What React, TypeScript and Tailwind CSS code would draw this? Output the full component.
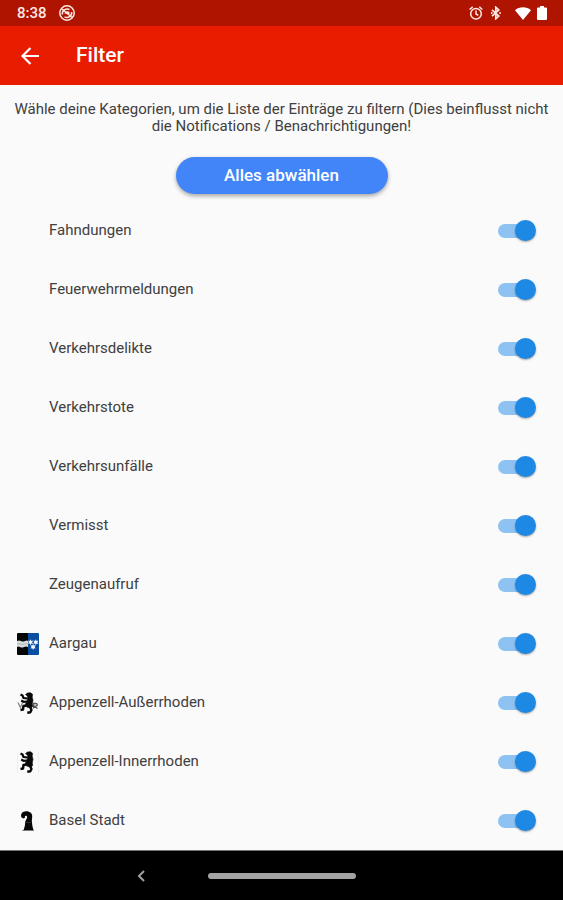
import { useState } from "react";
import type { ReactNode } from "react";

interface Category {
  id: string;
  label: string;
  icon?: ReactNode;
}

function AargauIcon() {
  return (
    <svg viewBox="0 0 22 22" className="size-[22px]" aria-hidden="true">
      <rect width="12" height="22" rx="1" fill="#050505" />
      <rect x="11" width="11" height="22" rx="1" fill="#0a4ea2" />
      <path d="M0 8q2-1 4 0t4 0 3 0v6q-2-1-4 0t-4 0-3 0z" fill="#d9dcdc" />
      <path d="M0 11q2-1 4 0t4 0 3 0" stroke="#a5a8a8" strokeWidth=".7" fill="none" />
      <g fill="#f4f8ff">
        <path d="M13.5 6.3l.8 1.6 1.8-.3-1 1.6 1 1.7-1.800-.3-.8 1.600-.8-1.600-1.600.3.8-1.700-.8-1.600 1.600.3z" />
        <path d="M18.800 6.300l.8 1.600 1.800-.3-1 1.600 1 1.700-1.800-.3-.8 1.600-.8-1.600-1.800.3 1-1.700-1-1.600 1.800.3z" />
        <path d="M16.100 11l.8 1.600 1.800-.3-1 1.600 1 1.700-1.800-.3-.8 1.600-.8-1.600-1.800.3 1-1.700-1-1.600 1.800.3z" />
      </g>
    </svg>
  );
}

function Bear() {
  return (
    <g fill="none" stroke="#080808" strokeLinejoin="round">
      <path d="M8.500 2.500l2-1.500 3-.3 2 1.500-.3 3 .8 3-.7 3.500.3 3-2 1.500-4-1.200-1.300-2.800 1.700-3 .7-3.200-.2-1.700z" fill="#080808" strokeWidth=".6" />
      <path d="M10.500 6.500L6.500 6 5.500 3.500 3.500 2.500" strokeWidth="2.200" />
      <path d="M10.500 9.500L6.500 9.800 4.200 8.500" strokeWidth="2.200" />
      <path d="M9.500 13.500l-3 .5-.5 3.500-2.500.5" strokeWidth="2.500" />
      <path d="M13 15l1.500 3-1.200 2.300-3 .4" strokeWidth="2.400" />
    </g>
  );
}

function AusserrhodenIcon() {
  return (
    <svg viewBox="0 0 22 22" className="size-[22px]" aria-hidden="true">
      <path d="M1 10.500l2.300 5 2.300-5" fill="none" stroke="#8b8b8b" strokeWidth="1.300" />
      <path d="M16.500 16.500v-5h2.200q1.600 0 1.600 1.300t-1.600 1.300H17l3.500 2.400" fill="none" stroke="#555" strokeWidth="1.300" />
      <Bear />
    </svg>
  );
}

function InnerrhodenIcon() {
  return (
    <svg viewBox="0 0 22 22" className="size-[22px]" aria-hidden="true">
      <path d="M.5 0v22M21.500 0v22" stroke="#eee" />
      <Bear />
    </svg>
  );
}

function BaselIcon() {
  return (
    <svg viewBox="0 0 22 22" className="size-[22px]" aria-hidden="true">
      <path
        d="M4.500 7.500C3.200 4 5.500 1.200 9 1.200c4.500 0 6.500 2.400 6.200 5.600L14.800 11l.6 5 1 4H6.600l1.200-4 .5-4.500 1.800-3.700c.3-1.400-.4-2-1.300-2-.9 0-1.100.7-.7 1.700L6.500 8.600z"
        fill="#080808"
      />
      <path d="M8.500 12.500h5.500" stroke="#444" strokeWidth=".6" />
      <path d="M5.500 20.500h11.500" stroke="#777" />
    </svg>
  );
}

const categories: Category[] = [
  { id: "fahndungen", label: "Fahndungen" },
  { id: "feuerwehr", label: "Feuerwehrmeldungen" },
  { id: "verkehrsdelikte", label: "Verkehrsdelikte" },
  { id: "verkehrstote", label: "Verkehrstote" },
  { id: "verkehrsunfaelle", label: "Verkehrsunfälle" },
  { id: "vermisst", label: "Vermisst" },
  { id: "zeugenaufruf", label: "Zeugenaufruf" },
  { id: "ag", label: "Aargau", icon: <AargauIcon /> },
  { id: "ar", label: "Appenzell-Außerrhoden", icon: <AusserrhodenIcon /> },
  { id: "ai", label: "Appenzell-Innerrhoden", icon: <InnerrhodenIcon /> },
  { id: "bs", label: "Basel Stadt", icon: <BaselIcon /> },
];

function StatusBar() {
  return (
    <div className="flex h-[26px] items-center bg-[#ae1400] pr-4 pl-[17px] text-[#ffe9e4]">
      <span className="text-[15px] font-medium">8:38</span>
      <svg viewBox="0 0 16 16" className="ml-3 size-4" fill="none" stroke="currentColor" aria-hidden="true">
        <circle cx="8" cy="8" r="7.200" strokeWidth="1.500" />
        <path d="M3.300 9.500C2.800 5.500 7 2.800 10.500 4.500M12.700 7c.4 4-3.700 6.500-7.200 4.800" strokeWidth="1.500" />
        <path d="M3 4l10 8.500" strokeWidth="1.300" />
        <path d="M5.500 8.500C6 6.500 8.500 5.500 10.500 7v2.500z" fill="currentColor" stroke="none" />
      </svg>
      <div className="ml-auto flex items-center">
        <svg viewBox="0 0 14 14" className="size-[14px]" fill="none" stroke="currentColor" aria-hidden="true">
          <circle cx="7" cy="7.700" r="5.300" strokeWidth="1.500" />
          <path d="M7 4.500v3.500l2.300 1.400M.6 3.500L3.700.9M13.400 3.500L10.300.9" strokeWidth="1.500" />
        </svg>
        <svg viewBox="0 0 10 14" className="ml-2 h-[14px] w-[10px]" fill="none" stroke="currentColor" aria-hidden="true">
          <path d="M1 3.800l6.800 6.200L4.800 12.800V1.200L7.800 4 1 10.200" strokeWidth="1.700" />
          <path d="M9.100 6v2M.7 6v2" strokeWidth="1.400" />
        </svg>
        <svg viewBox="0 0 16 13" className="ml-[14px] h-[13px] w-4" fill="#fff" aria-hidden="true">
          <path d="M8 13L0 3.200C4.500-.6 11.500-.6 16 3.200z" />
        </svg>
        <svg viewBox="0 0 10 14" className="ml-[6px] h-[14px] w-[10px]" fill="#fff" aria-hidden="true">
          <path d="M3 0h4v1.400h2q1 0 1 1V13q0 1-1 1H1q-1 0-1-1V2.400q0-1 1-1h2z" />
        </svg>
      </div>
    </div>
  );
}

interface CategoryRowProps {
  category: Category;
  checked: boolean;
  onToggle: () => void;
}

function CategoryRow({ category, checked, onToggle }: CategoryRowProps) {
  return (
    <li className="flex h-[59px] items-center pr-[27px] pl-[17px]">
      <span className="mr-[10px] flex size-[22px] shrink-0">{category.icon}</span>
      <label htmlFor={category.id} className="flex-1 text-[15px] leading-[23px]">
        {category.label}
      </label>
      <input
        id={category.id}
        type="checkbox"
        role="switch"
        checked={checked}
        onChange={onToggle}
        className="relative h-[22px] w-[38px] shrink-0 cursor-pointer appearance-none before:absolute before:top-1 before:left-0 before:h-[14px] before:w-[35px] before:rounded-full before:bg-gray-300 before:content-[''] after:absolute after:top-0 after:left-0 after:size-[21px] after:rounded-full after:bg-gray-50 after:shadow-[0_1px_2px_rgba(0,0,0,0.35)] after:content-[''] checked:before:bg-[#8ec2f2] checked:after:left-[17px] checked:after:bg-[#1e88e5]"
      />
    </li>
  );
}

export default function App() {
  const [selected, setSelected] = useState<string[]>(categories.map((c) => c.id));

  const toggle = (id: string) =>
    setSelected((prev) => (prev.includes(id) ? prev.filter((x) => x !== id) : [...prev, id]));

  return (
    <div className="flex min-h-screen flex-col bg-[#fafafa] font-[Roboto,'Liberation_Sans',sans-serif] text-[#404040]">
      <StatusBar />
      <header className="flex h-[59px] items-center bg-[#e91c00] pl-5 text-white">
        <button type="button" aria-label="Zurück" className="flex size-5 cursor-pointer items-center justify-center">
          <svg viewBox="0 0 20 20" className="size-5" fill="none" stroke="currentColor" strokeWidth="2.200" aria-hidden="true">
            <path d="M19 10H3M10.500 2L2.500 10l8 8" />
          </svg>
        </button>
        <h1 className="ml-9 text-[21px] font-medium">Filter</h1>
      </header>

      <main className="flex flex-1 flex-col">
        <p className="px-3 pt-4 text-center text-[15px] leading-[17px]">
          Wähle deine Kategorien, um die Liste der Einträge zu filtern (Dies beinflusst nicht die Notifications /
          Benachrichtigungen!
        </p>
        <button
          type="button"
          onClick={() => setSelected([])}
          className="mt-[22px] h-[37px] w-[212px] cursor-pointer self-center rounded-full bg-[#4285f9] text-[17px] font-medium text-white shadow-[0_2px_4px_rgba(0,0,0,0.35)]"
        >
          Alles abwählen
        </button>
        <ul className="mt-[7px]">
          {categories.map((c) => (
            <CategoryRow
              key={c.id}
              category={c}
              checked={selected.includes(c.id)}
              onToggle={() => toggle(c.id)}
            />
          ))}
        </ul>
      </main>

      <nav className="flex h-[50px] items-center justify-center border-t border-[#777] bg-black">
        <div className="flex flex-1 justify-end">
          <svg viewBox="0 0 8 12" className="mr-[63px] h-3 w-2" fill="none" stroke="#a0a0a0" strokeWidth="2" aria-hidden="true">
            <path d="M7 1L2 6l5 5" />
          </svg>
        </div>
        <div className="h-[6px] w-[148px] rounded-full bg-[#a3a3a3]" />
        <div className="flex-1" />
      </nav>
    </div>
  );
}
